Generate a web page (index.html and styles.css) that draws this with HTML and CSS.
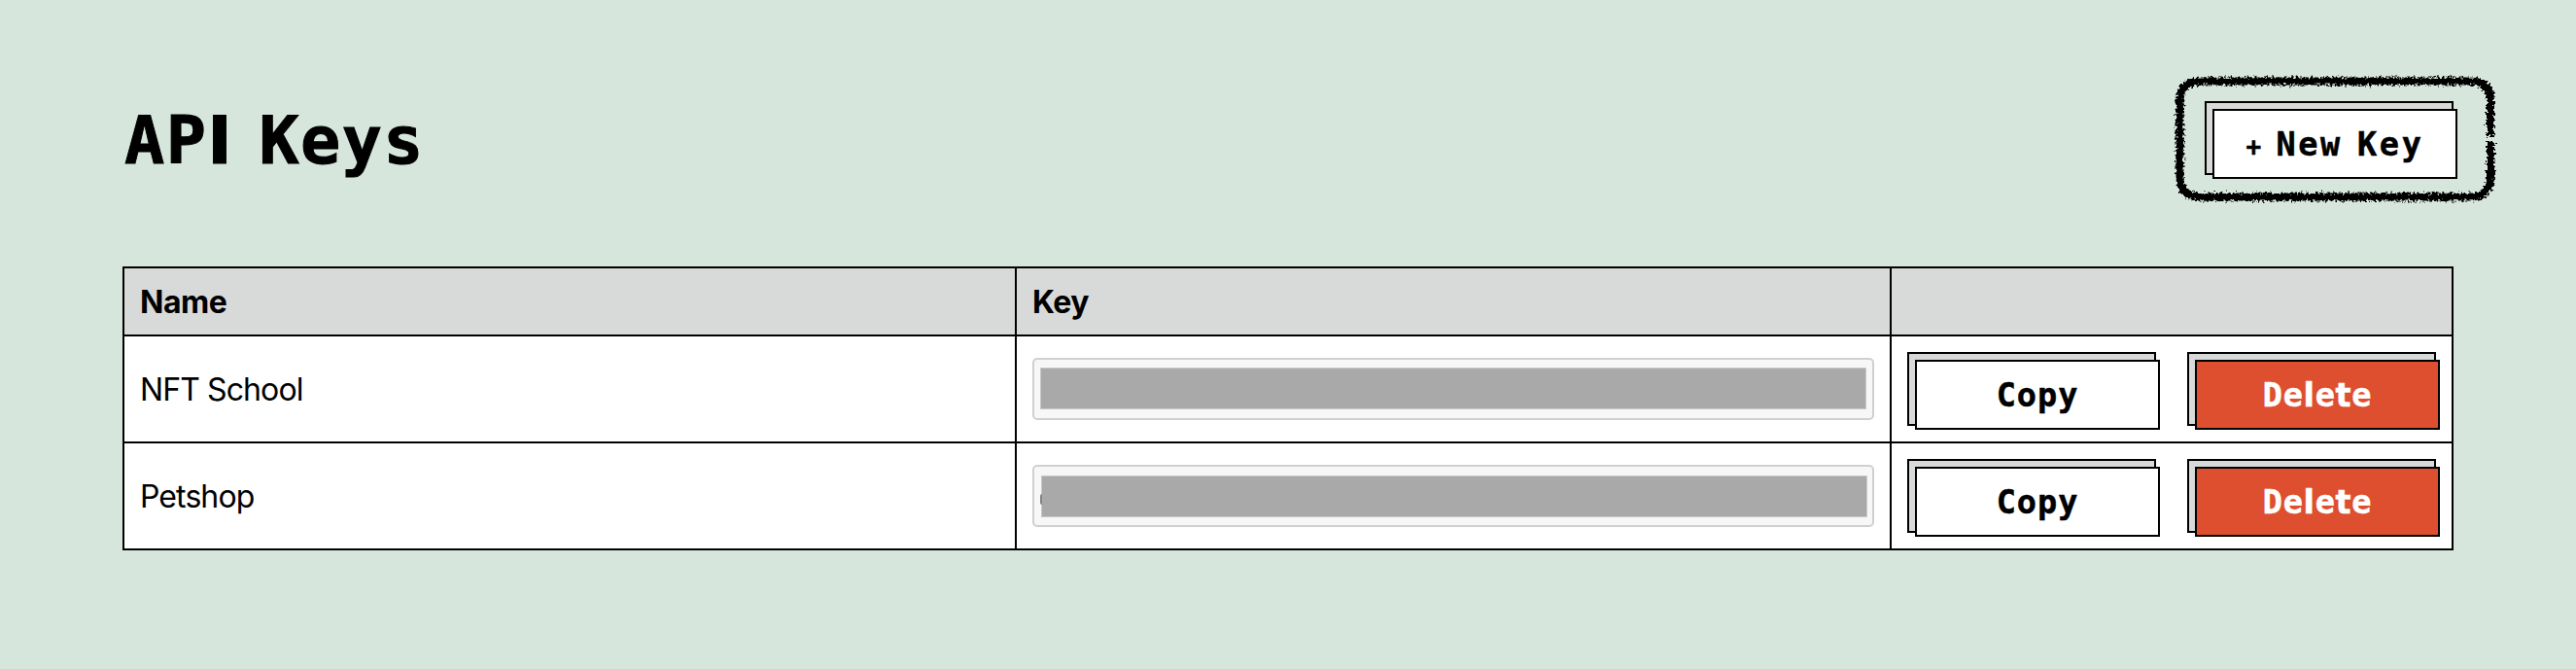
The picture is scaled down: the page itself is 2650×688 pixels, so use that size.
FILE: index.html
```html
<!DOCTYPE html>
<html lang="en">
<head>
<meta charset="utf-8">
<title>API Keys</title>
<link rel="stylesheet" href="styles.css">
</head>
<body>
<main class="page">
  <header class="top">
    <h1 class="title">AP<span class="title-i">I</span> Keys</h1>
    <div class="new-key">
      <svg class="scribble" width="344" height="144" viewBox="0 0 344 144" aria-hidden="true">
        <defs>
          <filter id="rough" x="0" y="0" width="344" height="144" filterUnits="userSpaceOnUse">
            <feTurbulence type="fractalNoise" baseFrequency="0.4" numOctaves="3" seed="7" result="n"/>
            <feDisplacementMap in="SourceGraphic" in2="n" scale="8" xChannelSelector="R" yChannelSelector="G"/>
          </filter>
        </defs>
        <path filter="url(#rough)" fill="none" stroke="#000" stroke-width="8" d="M332 70V33.500Q332 13.500 311 13.500H34Q12.500 13.500 12.500 34V111Q12.500 132.500 34 132.500H311Q332 132.500 332 112V76"/>
      </svg>
      <button class="btn btn-new"><span class="plus">+</span> New Key</button>
    </div>
  </header>
  <section class="table">
    <div class="cell head">Name</div>
    <div class="cell head">Key</div>
    <div class="cell head"></div>

    <div class="cell">NFT School</div>
    <div class="cell"><div class="code"><div class="mask"></div></div></div>
    <div class="cell actions">
      <button class="btn">Copy</button>
      <button class="btn danger">De<span class="l">l</span>e<span class="t">t</span>e</button>
    </div>

    <div class="cell">Petshop</div>
    <div class="cell"><div class="code code-second"><div class="mask"></div></div></div>
    <div class="cell actions">
      <button class="btn">Copy</button>
      <button class="btn danger">De<span class="l">l</span>e<span class="t">t</span>e</button>
    </div>
  </section>
</main>
</body>
</html>
```
FILE: styles.css
```css
*, *::before, *::after { box-sizing: border-box; }
body {
  margin: 0;
  background: #d6e6dc;
  color: #000;
  font-family: Inter, "Liberation Sans", sans-serif;
  font-size: 32px;
  letter-spacing: -0.9px;
}
.page { padding: 70px 126px 0; height: 688px; }
.top {
  display: flex;
  justify-content: space-between;
  height: 204px;
  margin-right: -50px;
}
.title {
  margin: 34px 0 0 2px;
  font: bold 68.5px/80px "DejaVu Sans Mono", monospace;
  letter-spacing: 1.4px;
  word-spacing: -17px;
  white-space: nowrap;
  -webkit-text-stroke: 1px #000;
}
.title-i { font-family: "DejaVu Sans", sans-serif; letter-spacing: 2px; }
.new-key { position: relative; width: 344px; height: 144px; padding: 42px 0 0 46px; }
.scribble { position: absolute; left: 0; top: 0; }
.btn {
  position: relative;
  z-index: 0;
  width: 252px;
  height: 72px;
  padding: 0;
  border: 0;
  background: none;
  color: #000;
  font: bold 33.5px/73px "DejaVu Sans Mono", monospace;
  letter-spacing: 1px;
  white-space: nowrap;
  -webkit-text-stroke: 0.5px currentColor;
}
.btn::before, .btn::after {
  content: "";
  position: absolute;
  border: 2px solid #000;
}
.btn::before { z-index: -2; left: -8px; top: -8px; width: 256px; height: 76px; background: #d8dad9; }
.btn::after { z-index: -1; inset: 0; background: #fff; }
.danger { color: #fff; letter-spacing: 0.7px; }
.danger::after { background: #dd4f2e; }
.btn-new { letter-spacing: 2.6px; word-spacing: -7.5px; }
.plus { font-size: 26px; letter-spacing: 0; }
.l, .t { font-family: "DejaVu Sans", sans-serif; }
.table {
  display: grid;
  grid-template-columns: 916px 898px 576px;
  grid-template-rows: 68px 108px 108px;
  gap: 2px;
  width: 2398px;
  border: 2px solid #000;
  background: #000;
}
.cell { display: flex; align-items: center; padding: 0 16px; background: #fff; }
.head { background: #d8dad9; font-weight: 700; letter-spacing: -0.5px; }
.actions { align-items: flex-start; padding: 24px 12px 0 24px; gap: 36px; }
.code {
  position: relative;
  width: 866px;
  height: 64px;
  padding: 8px 6px;
  border: 2px solid #d0d0d0;
  border-radius: 5px;
  background: #f7f7f7;
}
.mask { width: 850px; height: 43px; border: 1px solid #c9c9c9; background: #a9a9a9; }
.code-second { padding: 9px 7px; }
.code-second::before {
  content: "";
  position: absolute;
  left: 6px;
  top: 28px;
  width: 2px;
  height: 11px;
  border-radius: 2px 0 0 2px;
  background: #858585;
}
```
